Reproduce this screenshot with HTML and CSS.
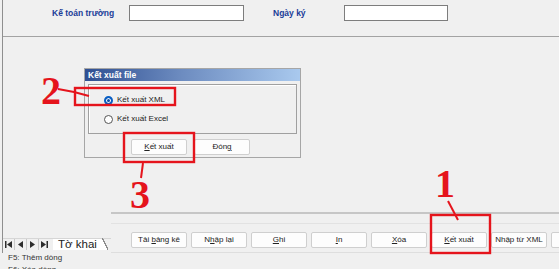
FILE: index.html
```html
<!DOCTYPE html>
<html lang="vi">
<head>
  <meta charset="UTF-8" />
  <title>Kết xuất file</title>
  <link rel="stylesheet" href="styles.css">
</head>
<body>
  <div class="screen">
    <div class="sheet">
      <div class="head">
        <label class="field-label kt">Kế toán trường</label>
        <span class="field"></span>
        <label class="field-label nk">Ngày ký</label>
        <span class="field date"></span>
      </div>
    </div>

    <div class="bottom">
      <div class="tabs">
        <div class="tabstrip">
          <span class="nav"><svg width="7" height="7" viewBox="0 0 7 7"><rect x="0" y="0" width="1.5" height="7"/><path d="M7 0L2 3.5L7 7z"/></svg></span>
          <span class="nav"><svg width="5" height="7" viewBox="0 0 5 7"><path d="M5 0L0 3.5L5 7z"/></svg></span>
          <span class="nav"><svg width="5" height="7" viewBox="0 0 5 7"><path d="M0 0L5 3.5L0 7z"/></svg></span>
          <span class="nav"><svg width="7" height="7" viewBox="0 0 7 7"><path d="M0 0L5 3.5L0 7z"/><rect x="5.5" y="0" width="1.5" height="7"/></svg></span>
          <span class="tab">Tờ khai</span>
        </div>
      </div>
      <div class="toolbar">
        <div class="tool-rule"></div>
        <div class="btn-row">
          <button class="btn">Tải <u>b</u>ảng kê</button>
          <button class="btn">N<u>h</u>ập lại</button>
          <button class="btn"><u>G</u>hi</button>
          <button class="btn"><u>I</u>n</button>
          <button class="btn"><u>X</u>óa</button>
          <button class="btn"><u>K</u>ết xuất</button>
          <button class="btn">Nhập từ XML</button>
          <button class="btn"></button>
        </div>
      </div>
    </div>

    <div class="status">
      <div>F5: Thêm dòng</div>
      <div>F6: Xóa dòng</div>
    </div>

    <!-- hộp thoại nổi trên biểu mẫu -->
    <div class="dialog">
      <div class="dialog-title">Kết xuất file</div>
      <div class="group">
        <div class="option"><span class="radio checked"></span>Kết xuất XML</div>
        <div class="option"><span class="radio"></span>Kết xuất Excel</div>
      </div>
      <div class="dialog-actions">
        <button class="btn"><u>K</u>ết xuất</button>
        <button class="btn">Đón<u>g</u></button>
      </div>
    </div>

    <!-- chú thích đỏ -->
    <svg class="marks" width="559" height="269" viewBox="0 0 559 269">
      <g fill="none" stroke="#e5141c">
        <rect x="75" y="88" width="100" height="17" stroke-width="2.4"/>
        <rect x="124" y="133" width="70" height="29" stroke-width="2.4"/>
        <rect x="431" y="215" width="59" height="38" stroke-width="2.4"/>
        <path d="M58 89L74 92L89 96" stroke-width="2"/>
        <path d="M143 163L141 178" stroke-width="2"/>
        <path d="M448 201L458 220" stroke-width="2"/>
      </g>
      <g class="num">
        <text x="41" y="104">2</text>
        <text x="130" y="208">3</text>
        <text x="435" y="197">1</text>
      </g>
    </svg>
  </div>
</body>
</html>
```

FILE: styles.css
```css
* {
  box-sizing: border-box;
}
body {
  margin: 0;
  background: #f0f0f0;
  font-family: "Liberation Sans", Arial, sans-serif;
  font-size: 8px;
  color: #222;
}
.screen {
  position: relative;
  width: 559px;
  height: 269px;
  overflow: hidden;
}
.sheet {
  height: 212px;
  margin-left: 2px;
  border-left: 1px solid #8f8f8f;
}
.head {
  height: 37px;
  border-bottom: 1px solid #a3a3a3;
  display: flex;
  align-items: flex-start;
  padding: 5px 0 0 49px;
}
.field-label {
  color: #1a3c98;
  font-weight: bold;
  font-size: 8.5px;
  line-height: 16px;
  flex: none;
}
.kt {
  width: 77px;
}
.nk {
  width: 71px;
  margin-left: 29px;
}
.field {
  width: 115px;
  height: 16px;
  background: #fff;
  border: 1px solid #7d7d7d;
  flex: none;
}
.field.date {
  width: 104px;
}

.bottom {
  display: flex;
  height: 41px;
}
.tabs {
  width: 109px;
  margin-left: 2px;
  border-left: 1px solid #8f8f8f;
  flex: none;
}
.tabstrip {
  display: flex;
  align-items: center;
  height: 12px;
  margin-top: 26px;
  border-top: 1px solid #d6d6d6;
}
.nav {
  width: 12px;
  height: 11px;
  display: flex;
  align-items: center;
  justify-content: center;
  border-right: 1px solid #c9c9c9;
}
.nav svg {
  fill: #2c2c2c;
}
.nav:nth-child(4) {
  border-right: none;
  width: 11px;
}
.tab {
  position: relative;
  height: 11px;
  width: 49px;
  margin-left: 3px;
  padding-left: 5px;
  background: #fff;
  font-size: 11.5px;
  line-height: 11px;
  color: #222;
}
.tab::after {
  content: "";
  position: absolute;
  right: -6px;
  top: -1px;
  width: 6px;
  height: 12px;
  background: linear-gradient(to top right, #fff 44%, #8a8a8a 48%, #8a8a8a 56%, transparent 60%);
}

.toolbar {
  flex: 1;
  border-top: 2px solid #c6c6c6;
  overflow: hidden;
}
.tool-rule {
  height: 10px;
  border-bottom: 1px solid #e2e2e2;
}
.btn-row {
  display: flex;
  gap: 4px;
  padding: 8px 0 4px 20px;
  border-bottom: 1px solid #dedede;
}
.btn {
  flex: none;
  width: 56px;
  height: 16px;
  padding: 0;
  background: #fdfdfd;
  border: 1px solid #cfcfcf;
  border-radius: 2px;
  font-family: inherit;
  font-size: 8px;
  line-height: 14px;
  color: #222;
  text-align: center;
}

.status {
  margin-top: -1px;
  padding-left: 8px;
  line-height: 12px;
  color: #333;
}

.dialog {
  position: absolute;
  left: 84px;
  top: 68px;
  width: 217px;
  height: 90px;
  background: #f0f0f0;
  border: 1px solid #a6a6a6;
}
.dialog-title {
  height: 12px;
  background: linear-gradient(to right, #2f4f92, #6d8cc0 45%, #a9c9ee);
  color: #fff;
  font-weight: bold;
  font-size: 8.5px;
  line-height: 12px;
  padding-left: 3px;
}
.group {
  margin: 3px 3px 0;
  height: 50px;
  border: 1px solid #a0a0a0;
  box-shadow: inset 1px 1px #fff;
  padding: 10px 0 0 15px;
  display: flex;
  flex-direction: column;
  gap: 9px;
}
.option {
  display: flex;
  align-items: center;
  gap: 4px;
  height: 10px;
  line-height: 10px;
}
.radio {
  width: 9px;
  height: 9px;
  border-radius: 50%;
  border: 1px solid #555;
  background: #fff;
  flex: none;
}
.radio.checked {
  border: 2px solid #0a5fc4;
  box-shadow: inset 0 0 0 1px #fff;
  background: #0a4fa8;
}
.dialog-actions {
  display: flex;
  gap: 7px;
  padding: 5px 0 0 46px;
}

.marks {
  position: absolute;
  left: 0;
  top: 0;
  pointer-events: none;
}
.num {
  fill: #e5141c;
  font-family: "Liberation Serif", "Times New Roman", serif;
  font-weight: bold;
  font-size: 40px;
}
```
